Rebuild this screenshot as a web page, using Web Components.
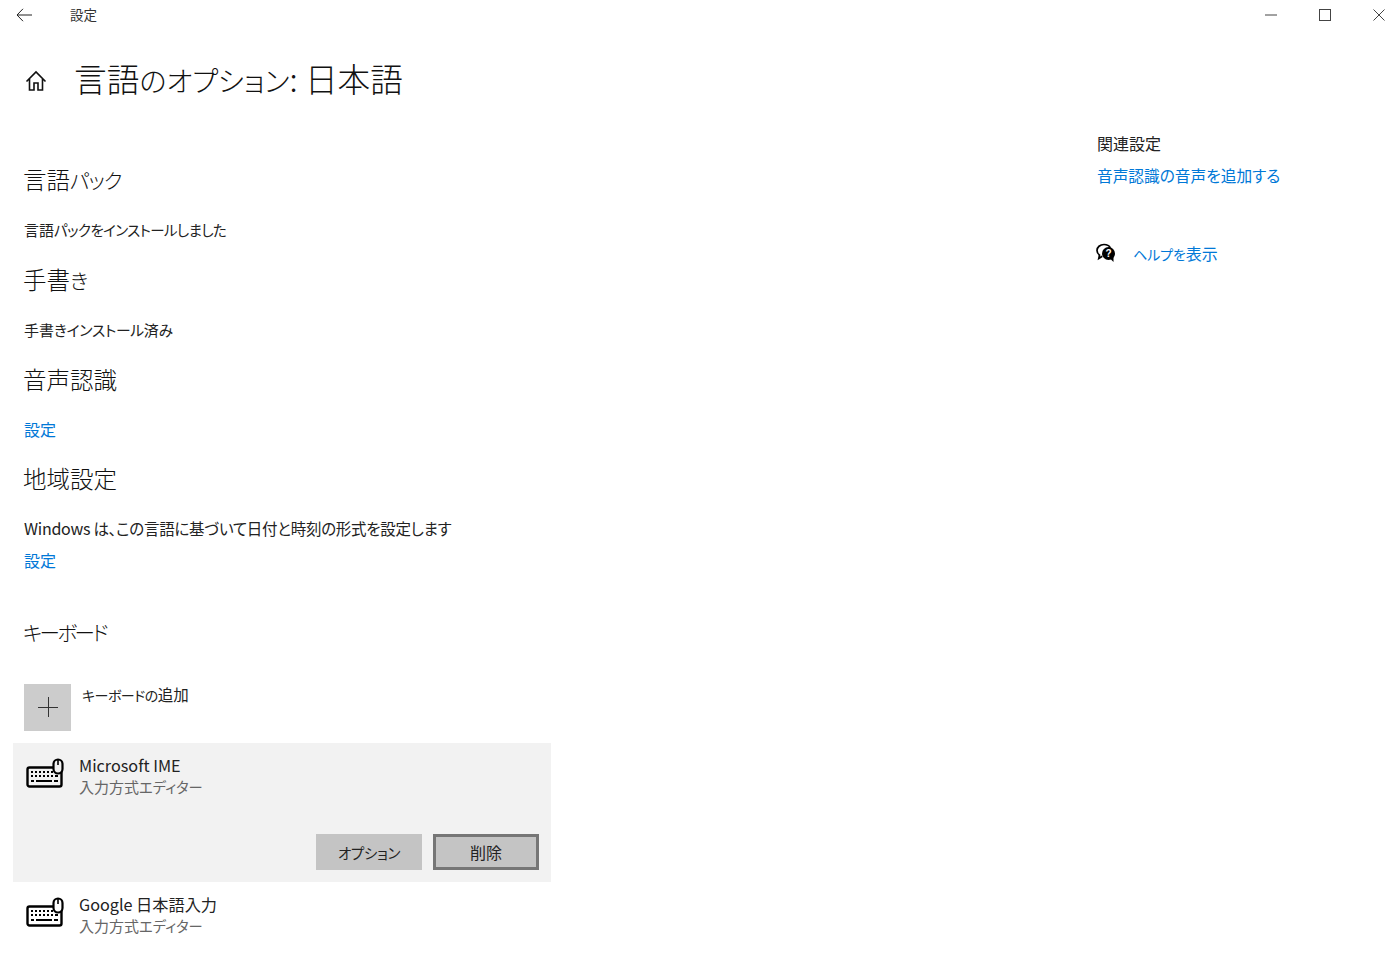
<!DOCTYPE html>
<html lang="ja"><head><meta charset="utf-8"><title>設定</title>
<style>
html,body{margin:0;padding:0;background:#fff;height:975px;overflow:hidden}
body{font-family:"Noto Sans CJK JP","Open Sans",sans-serif;color:#1a1a1a;font-feature-settings:"palt"}
</style></head><body>
<settings-app></settings-app>
<script>
const KB=`<svg width="40" height="32" viewBox="0 0 40 32" fill="none" stroke="#000"><rect x="1.5" y="9.5" width="34" height="19" rx="2" stroke-width="2.4" style="fill:var(--kb,#fff)"/><path d="M5 14h2M9 14h2M13 14h2M17 14h2M21 14h2M25 14h2M5 18h2M9 18h2M13 18h2M17 18h2M21 18h2M25 18h2M29 18h3M5 23h3M10 23h16M28 23h4" stroke-width="2.2"/><rect x="27.5" y="1.5" width="9" height="14" rx="4.5" stroke-width="2.2" style="fill:var(--bg,#fff)"/><path d="M32 2v5" stroke-width="1.6"/></svg>`;
function def(name,css,html){customElements.define(name,class extends HTMLElement{constructor(){super();this.attachShadow({mode:'open'}).innerHTML=`<style>${css}</style>${html}`}})}
def('title-bar',`:host{display:flex;align-items:center;height:30px;font-size:13.5px;color:#333}
.back{width:48px;display:flex;justify-content:center;margin-right:22px}
.t{flex:1;transform:translateY(-1px)}
.w{width:54px;height:30px;display:flex;align-items:center;justify-content:center}
.r{margin-right:-6px}`,`<div class="back"><svg width="16" height="14" viewBox="0 0 16 14" fill="none" stroke="#222" stroke-width="1"><path d="M16 7H1M7 .8 1 7l6 6.2"/></svg></div><div class="t"><slot></slot></div>
<div class="w"><svg width="12" height="2"><path d="M0 1h12" stroke="#444"/></svg></div>
<div class="w"><svg width="12" height="12"><rect x=".5" y=".5" width="11" height="11" fill="none" stroke="#444"/></svg></div>
<div class="w r"><svg width="12" height="12"><path d="M.5.5l11 11M11.5.5l-11 11" stroke="#444"/></svg></div>`);
def('page-title',`:host{display:flex;align-items:center;height:96px;padding:0 0 0 25px;font-size:32.700px;line-height:40px;font-weight:300;color:#111}
svg{margin-right:27px;margin-top:5px}`,`<svg width="22" height="22" viewBox="0 0 22 22" fill="none" stroke="#111" stroke-width="1.600"><path d="M1.500 11.500 11 2l9.500 9.500M4.500 9v11h4.500v-7h4v7h4.500V9"/></svg><div><slot></slot></div>`);
def('sec-head',`:host{display:block;font-size:23.500px;font-weight:300;line-height:34px;color:#111;margin-left:-1px}`,`<slot></slot>`);
def('sec-text',`:host{display:block;font-size:15px;line-height:22px;color:#222}`,`<slot></slot>`);
def('sec-link',`:host{display:block;font-size:16px;line-height:22px;color:#0078d7}`,`<slot></slot>`);
def('add-row',`:host{display:flex;height:47px;gap:11px;font-size:15.500px;color:#222}
.b{width:47px;height:47px;background:#ccc;display:flex;align-items:center;justify-content:center}
svg{margin-top:-1px}
.t{line-height:22px;margin-top:-1px}`,`<div class="b"><svg width="20" height="20"><path d="M10.500 0v20M0 10.500h20" stroke="#333" stroke-width="1"/></svg></div><div class="t"><slot></slot></div>`);
def('kb-item',`:host{display:block;padding:11px 12px 12px 11px;--kb:transparent;--bg:#fff}
:host([selected]){background:#f2f2f2;--bg:#f2f2f2}
.r{display:flex;gap:11px}
.i{width:42px;padding-top:4px;margin-left:2px}
.n{font-size:16.200px;line-height:22px;color:#222}
.s{font-size:15px;line-height:21px;color:#666}
.a{display:flex;justify-content:flex-end}`,`<div class="r"><div class="i">${KB}</div><div><div class="n"><slot name="name"></slot></div><div class="s"><slot name="sub"></slot></div></div></div><div class="a"><slot name="actions"></slot></div>`);
def('win-btn',`:host{display:flex;align-items:center;justify-content:center;width:106px;height:36px;box-sizing:border-box;background:#c4c4c4;font-size:14.500px;letter-spacing:-.3px;color:#222}
:host([focused]){border:3px solid #767676;font-size:16px;letter-spacing:0}`,`<slot></slot>`);
def('help-row',`:host{display:flex;align-items:center;gap:17px;font-size:16px;line-height:24px;color:#0078d7}
svg{margin-left:-1px}`,`<svg width="20" height="20" viewBox="0 0 20 20"><path d="M8 1.500C4 1.500 1 4.200 1 7.500c0 2 1 3.500 2.500 4.600L2.800 15.500l3.500-2.200" fill="none" stroke="#000" stroke-width="1.700"/><path d="M8 1.500c3 0 5.300 1.300 6.300 3.300" fill="none" stroke="#000" stroke-width="1.700"/><circle cx="12.500" cy="10.500" r="6.500" fill="#000"/><path d="M14 15.500l3.500 3.500v-6z" fill="#000"/><text x="12.500" y="14" font-size="10" font-weight="700" text-anchor="middle" fill="#fff" font-family="Liberation Sans">?</text></svg><span><slot></slot></span>`);
def('settings-app',`:host{display:block;font-feature-settings:"palt"}
.main{display:flex}
.left{width:538px;margin-left:13px;padding-top:36px}
.in{padding-left:11px}
.right{margin-left:546px;padding-top:5px}
.rt{font-size:16px;line-height:24px;color:#222}
.rl{font-size:15.700px;line-height:24px;color:#0078d7;margin-top:9px}
help-row{margin-top:53px}
.btns{display:flex;gap:11px;margin-top:37px}
.k,.kb,.tk,.x,.y,.e{line-height:1}
.k{font-size:20.700px;letter-spacing:-1px}
.kb{font-size:20.500px;letter-spacing:-2.500px}
.kh{margin-top:43px;margin-left:-1px}
.tk{font-size:28px}
add-row{margin-top:36px}
.k1{margin-top:12px}
.x{font-size:14.500px;letter-spacing:-.6px}
.y{font-size:14px;letter-spacing:-.5px}
.e{font-size:14.300px}
`,`<title-bar>設定</title-bar>
<page-title>言語<span class="tk">のオプション</span>: 日本語</page-title>
<div class="main"><div class="left"><div class="in">
<sec-head>言語<span class="k">パック</span></sec-head>
<sec-text style="margin-top:23px">言語<span class="x">パックをインストールしました</span></sec-text>
<sec-head style="margin-top:21px">手書<span class="k">き</span></sec-head>
<sec-text style="margin-top:23px">手書<span class="x" style="font-size:14.800px;letter-spacing:-.3px">きインストール</span>済<span class="x">み</span></sec-text>
<sec-head style="margin-top:21px">音声認識</sec-head>
<sec-link style="margin-top:22px">設定</sec-link>
<sec-head style="margin-top:21px">地域設定</sec-head>
<sec-text style="margin-top:22px;font-size:15.500px;letter-spacing:-.27px"><span style="font-size:16px;line-height:1">Windows</span> は、この言語に基づいて日付と時刻の形式を設定します</sec-text>
<sec-link style="margin-top:10px">設定</sec-link>
<sec-head class="kh"><span class="kb">キーボード</span></sec-head>
<add-row><span><span class="y">キーボードの</span>追加</span></add-row>
</div>
<kb-item class="k1" selected><span slot="name">Microsoft IME</span><span slot="sub">入力方式<span class="e">エディター</span></span>
<div slot="actions" class="btns"><win-btn>オプション</win-btn><win-btn focused>削除</win-btn></div></kb-item>
<kb-item><span slot="name">Google 日本語入力</span><span slot="sub">入力方式<span class="e">エディター</span></span></kb-item>
</div>
<div class="right"><div class="rt">関連設定</div><div class="rl">音声認識の音声を追加する</div><help-row><span class="x" style="letter-spacing:-.1px;font-size:14px">ヘルプを</span>表示</help-row></div></div>`);
</script></body></html>
